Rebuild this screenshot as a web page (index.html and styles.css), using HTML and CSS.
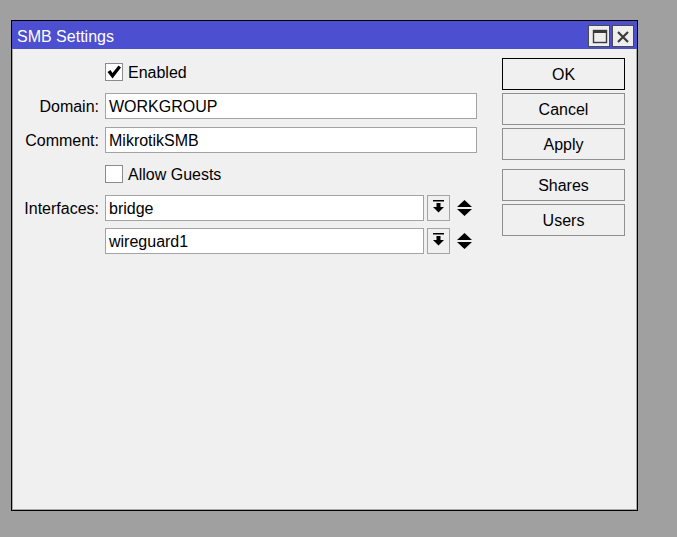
FILE: index.html
```html
<!DOCTYPE html>
<html>
<head>
<meta charset="utf-8">
<link rel="stylesheet" href="styles.css">
</head>
<body>
<div class="window">
  <div class="titlebar">
    <span class="title">SMB Settings</span>
    <div class="tbtns">
      <span class="tbtn"><svg width="20" height="20" viewBox="0 0 20 20"><rect x="4.5" y="4.5" width="13" height="12" fill="none" stroke="#3a3a3a" stroke-width="1.4"/><rect x="4" y="4" width="14" height="3" fill="#3a3a3a"/></svg></span>
      <span class="tbtn"><svg width="20" height="20" viewBox="0 0 20 20"><path d="M5 6 L15 16 M15 6 L5 16" stroke="#3a3a3a" stroke-width="2.2" fill="none"/></svg></span>
    </div>
  </div>
  <div class="content">
    <div class="form">
      <div class="row r-enabled">
        <span class="label"></span>
        <span class="cb"><svg width="16" height="16" viewBox="0 0 16 16"><path d="M1.5 8 L4.5 6 L6.5 9 L12.5 1.5 L15 3.5 L6.5 14.5 Z" fill="#000"/></svg></span>
        <span class="cbtext">Enabled</span>
      </div>
      <div class="row r-domain">
        <span class="label">Domain:</span>
        <span class="input wide">WORKGROUP</span>
      </div>
      <div class="row r-comment">
        <span class="label">Comment:</span>
        <span class="input wide">MikrotikSMB</span>
      </div>
      <div class="row r-guests">
        <span class="label"></span>
        <span class="cb"></span>
        <span class="cbtext">Allow Guests</span>
      </div>
      <div class="row r-if1">
        <span class="label">Interfaces:</span>
        <span class="input narrow">bridge</span>
        <span class="dd"><svg width="21" height="24" viewBox="0 0 21 24"><rect x="5" y="4" width="11" height="1.5" fill="#000"/><rect x="8.5" y="7" width="4" height="4" fill="#000"/><path d="M5 11 L16 11 L10.5 16.5 Z" fill="#000"/></svg></span>
        <span class="updown"><svg width="17" height="16" viewBox="0 0 17 16"><path d="M1 7 L16 7 L8.5 0 Z M1 9 L16 9 L8.5 16 Z" fill="#000"/></svg></span>
      </div>
      <div class="row r-if2">
        <span class="label"></span>
        <span class="input narrow">wireguard1</span>
        <span class="dd"><svg width="21" height="24" viewBox="0 0 21 24"><rect x="5" y="4" width="11" height="1.5" fill="#000"/><rect x="8.5" y="7" width="4" height="4" fill="#000"/><path d="M5 11 L16 11 L10.5 16.5 Z" fill="#000"/></svg></span>
        <span class="updown"><svg width="17" height="16" viewBox="0 0 17 16"><path d="M1 7 L16 7 L8.5 0 Z M1 9 L16 9 L8.5 16 Z" fill="#000"/></svg></span>
      </div>
    </div>
    <div class="buttons">
      <span class="btn default">OK</span>
      <span class="btn">Cancel</span>
      <span class="btn">Apply</span>
      <span class="btn sep">Shares</span>
      <span class="btn">Users</span>
    </div>
  </div>
</div>
</body>
</html>
```

FILE: styles.css
```css
html, body {
  margin: 0;
  padding: 0;
  background: #a0a0a0;
  font-family: "Liberation Sans", Arial, sans-serif;
  font-size: 16px;
  color: #000;
}

.window {
  box-sizing: border-box;
  margin: 20px 0 0 11px;
  width: 627px;
  height: 491px;
  border: 1px solid #000;
  display: flex;
  flex-direction: column;
  background: #f0f0f0;
}

.titlebar {
  height: 28px;
  background: #4c4fcf;
  display: flex;
  align-items: center;
  justify-content: space-between;
  padding: 0 3px 0 5px;
}

.title {
  color: #fff;
  font-size: 16px;
  line-height: 28px;
  padding-top: 3px;
}

.tbtns {
  display: flex;
  gap: 2px;
  padding-top: 1px;
}

.tbtn {
  box-sizing: border-box;
  width: 22px;
  height: 22px;
  background: #eeeeee;
  border: 1px solid #4a4a4a;
  display: flex;
  align-items: center;
  justify-content: center;
}

.content {
  flex: 1;
  display: flex;
  border: 1px solid #a8a8a8;
  border-top: none;
}

.form {
  width: 464px;
  padding-top: 14px;
  display: flex;
  flex-direction: column;
}

.row {
  display: flex;
  align-items: center;
}

.r-enabled { height: 18px; }
.r-domain { margin-top: 12px; height: 26px; }
.r-comment { margin-top: 8px; height: 26px; }
.r-guests { margin-top: 12px; height: 18px; }
.r-if1 { margin-top: 12px; height: 26px; }
.r-if2 { margin-top: 7px; height: 26px; }

.label {
  width: 86px;
  margin-right: 6px;
  text-align: right;
  white-space: nowrap;
  padding-top: 2px;
}

.cb {
  box-sizing: border-box;
  width: 18px;
  height: 18px;
  background: #fff;
  border: 1px solid #8c8c8c;
  display: flex;
  align-items: center;
  justify-content: center;
}

.cbtext {
  margin-left: 5px;
  padding-top: 2px;
}

.input {
  box-sizing: border-box;
  height: 26px;
  background: #fff;
  border: 1px solid #a3a3a3;
  padding: 1px 0 0 3px;
  line-height: 24px;
  white-space: nowrap;
}

.wide { width: 372px; }
.narrow { width: 319px; }

.dd {
  box-sizing: border-box;
  width: 23px;
  height: 26px;
  margin-left: 3px;
  border: 1px solid #a3a3a3;
  background: #f0f0f0;
  display: flex;
  align-items: center;
  justify-content: center;
}

.dd svg { display: block; flex: none; }

.updown {
  margin-left: 6px;
  display: flex;
  align-items: center;
}

.buttons {
  margin-left: 25px;
  padding-top: 9px;
  display: flex;
  flex-direction: column;
  gap: 3px;
}

.btn {
  box-sizing: border-box;
  width: 123px;
  height: 32px;
  border: 1px solid #8f8f8f;
  display: flex;
  align-items: center;
  justify-content: center;
  background: #f0f0f0;
  padding-top: 2px;
}

.btn.default {
  border-color: #000;
}

.btn.sep {
  margin-top: 6px;
}
```
